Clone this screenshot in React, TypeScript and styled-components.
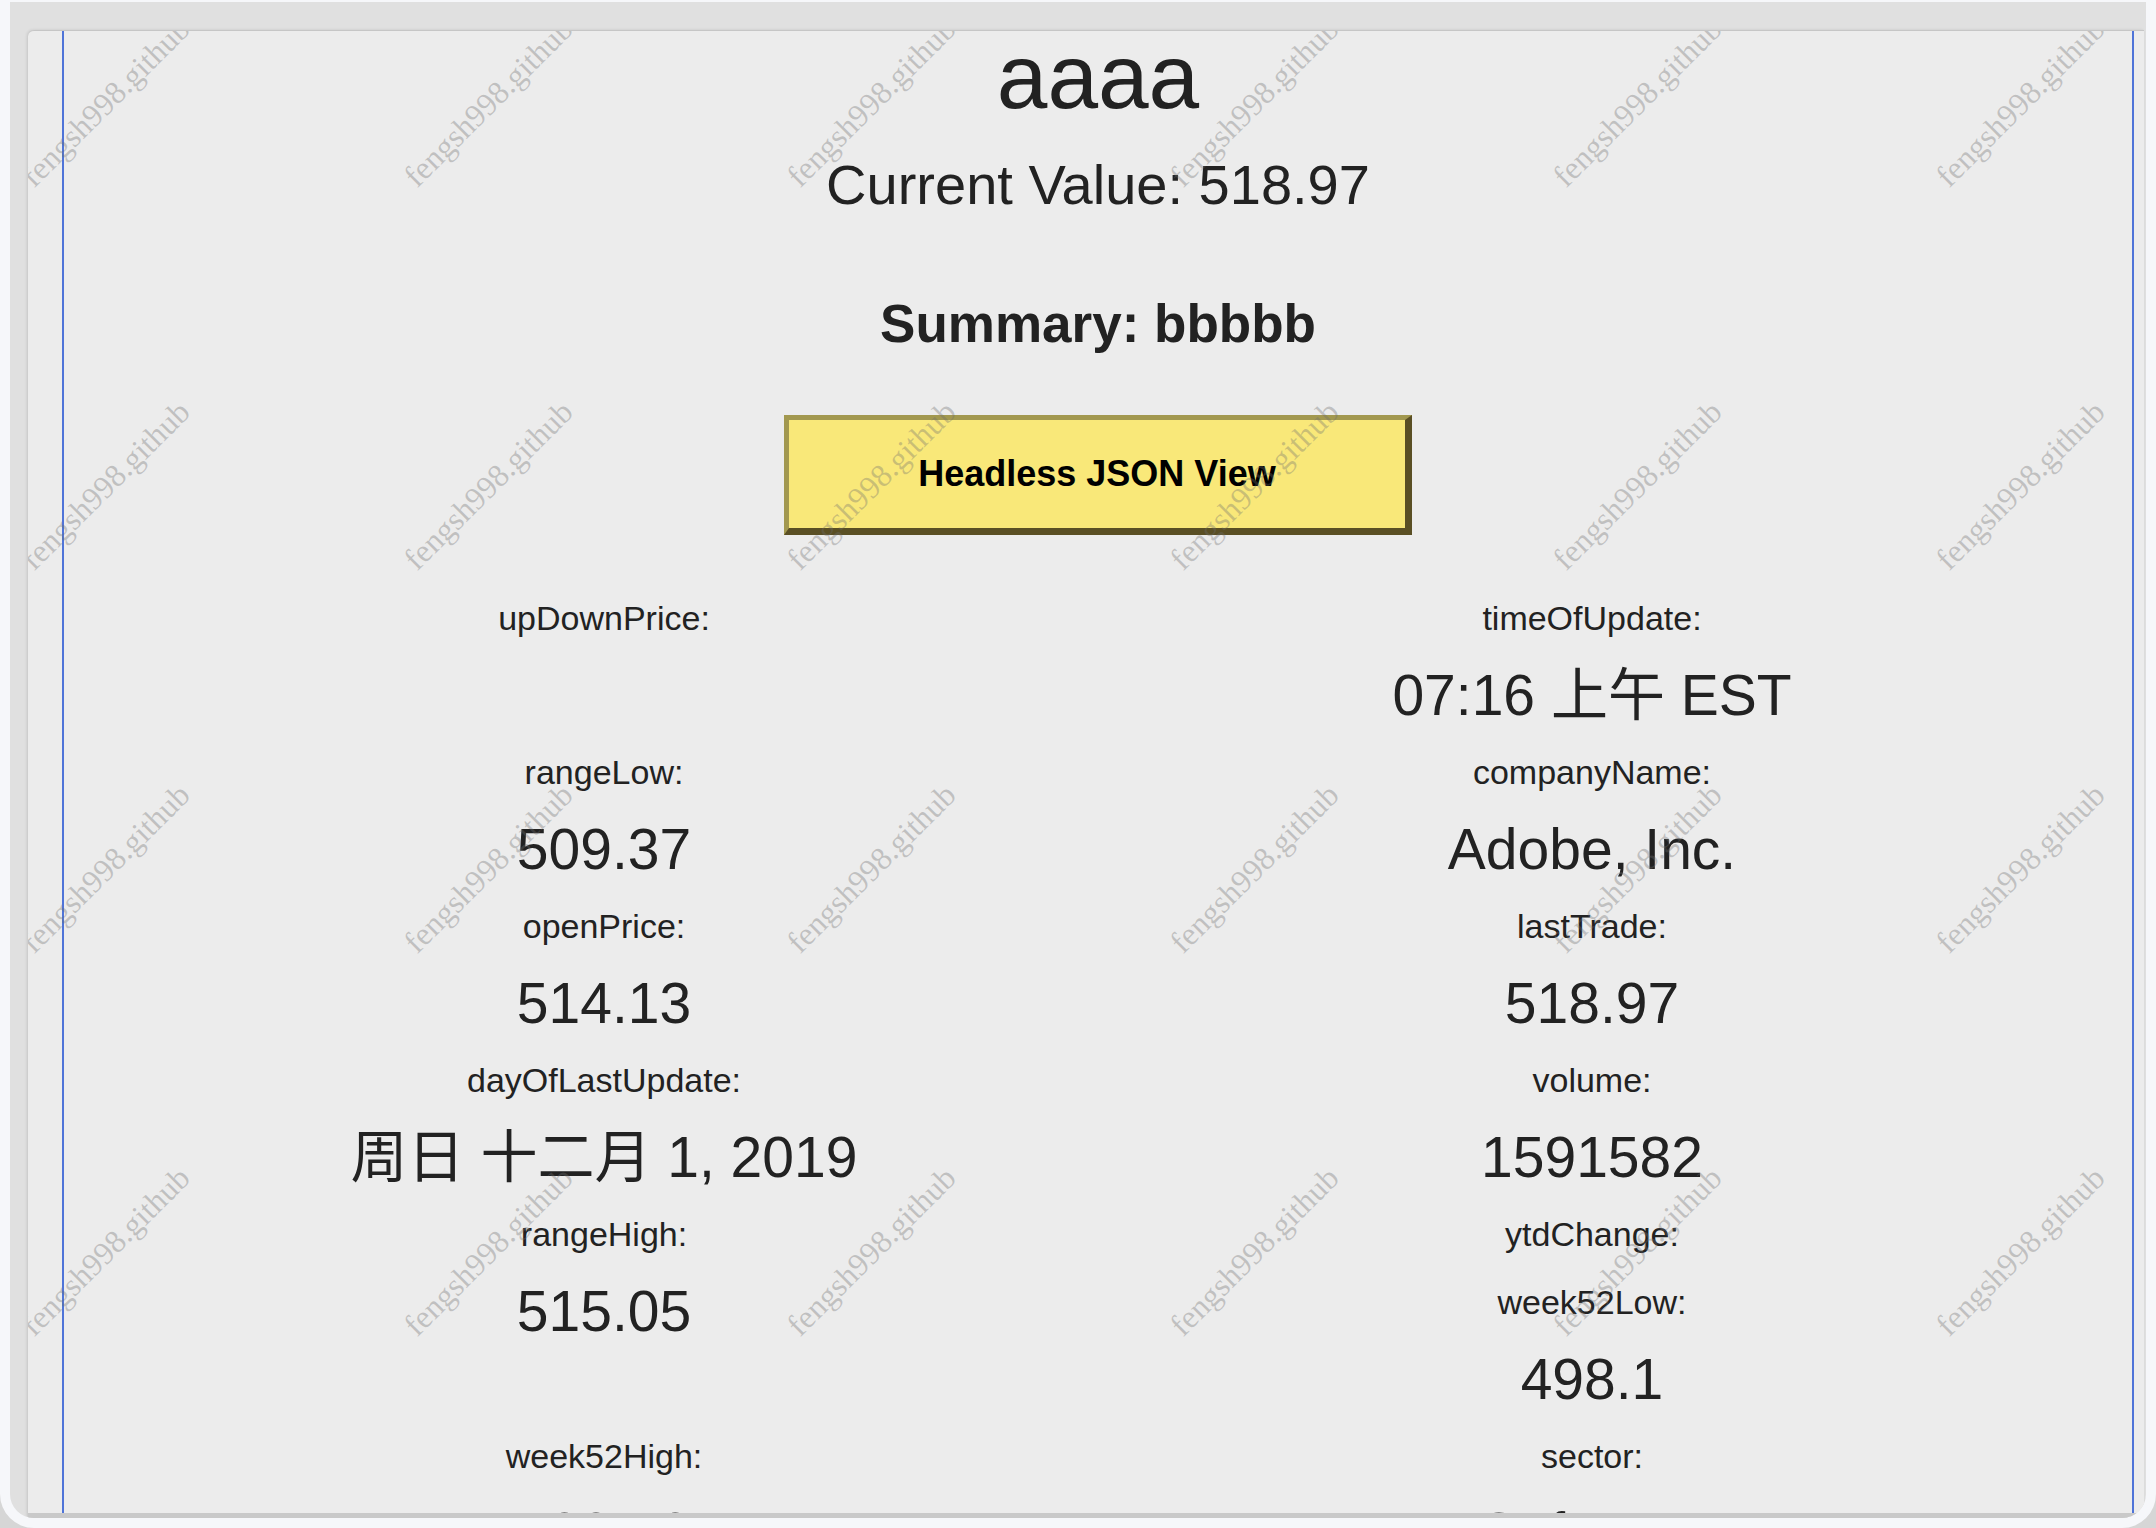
import React from 'react';
import styled, { createGlobalStyle } from 'styled-components';

/**
 * Data
 */
type Entry = { label: string; value: string };
type Row = { left: Entry[]; right: Entry[] };

const rows: Row[] = [
  {
    left: [{ label: 'upDownPrice', value: '' }],
    right: [{ label: 'timeOfUpdate', value: '07:16 上午 EST' }],
  },
  {
    left: [{ label: 'rangeLow', value: '509.37' }],
    right: [{ label: 'companyName', value: 'Adobe, Inc.' }],
  },
  {
    left: [{ label: 'openPrice', value: '514.13' }],
    right: [{ label: 'lastTrade', value: '518.97' }],
  },
  {
    left: [{ label: 'dayOfLastUpdate', value: '周日 十二月 1, 2019' }],
    right: [{ label: 'volume', value: '1591582' }],
  },
  {
    left: [{ label: 'rangeHigh', value: '515.05' }],
    right: [
      { label: 'ytdChange', value: '' },
      { label: 'week52Low', value: '498.1' },
    ],
  },
  {
    left: [{ label: 'week52High', value: '528.43' }],
    right: [{ label: 'sector', value: 'Software' }],
  },
];

const MARK_COLS = 6;
const MARK_ROWS = 4;

/**
 * Global
 */
const GlobalStyle = createGlobalStyle`
  html, body {
    margin: 0;
    padding: 0;
  }
  body {
    background: #d6d6d6;
    color: #222;
    font-family: 'Liberation Sans', Helvetica, Arial, 'Noto Sans CJK SC', sans-serif;
  }
`;

/**
 * Field
 */
const Field = ({ label, value }: Entry) => (
  <FieldBox>
    <Label>{`${label}:`}</Label>
    {value && <Value>{value}</Value>}
  </FieldBox>
);

const App = () => {
  return (
    <>
      <GlobalStyle />
      <Window>
        <Panel>
          <Page>
            <Title>aaaa</Title>
            <Current>Current Value: 518.97</Current>
            <Summary>Summary: bbbbb</Summary>
            <JsonButton type="button">Headless JSON View</JsonButton>
            <Grid>
              {rows.map((row, key) => (
                <React.Fragment key={key}>
                  <Cell>
                    {row.left.map((entry) => (
                      <Field key={entry.label} {...entry} />
                    ))}
                  </Cell>
                  <Cell>
                    {row.right.map((entry) => (
                      <Field key={entry.label} {...entry} />
                    ))}
                  </Cell>
                </React.Fragment>
              ))}
            </Grid>
          </Page>
          <Watermarks>
            {Array.from({ length: MARK_COLS * MARK_ROWS }).map((_, key) => (
              <Mark key={key}>
                <span>fengsh998.github</span>
              </Mark>
            ))}
          </Watermarks>
        </Panel>
      </Window>
    </>
  );
};

/**
 * Styled Components
 */
const Window = styled.div`
  box-sizing: border-box;
  width: 2156px;
  height: 1528px;
  display: flex;
  flex-direction: column;
  background: #e0e0e0;
  border-style: solid;
  border-color: #f6f7fa;
  border-width: 2px 10px 10px 10px;
  border-radius: 0 0 34px 34px;
  padding: 28px 2px 0 18px;
  overflow: hidden;
`;

const Panel = styled.div`
  position: relative;
  flex: 1;
  display: flex;
  align-items: flex-start;
  background: #ececec;
  border-top: 1px solid #c6c6c6;
  border-bottom: 5px solid #c9c9c9;
  border-top-left-radius: 6px;
  box-shadow: -1px 0 3px rgba(0, 0, 0, 0.12);
  overflow: hidden;
`;

const Page = styled.div`
  flex: 1;
  align-self: stretch;
  margin: 0 10px 0 34px;
  border-left: 2px solid #4f74d8;
  border-right: 2px solid #4f74d8;
  display: flex;
  flex-direction: column;
  align-items: center;
  text-align: center;

  & > * {
    flex-shrink: 0;
  }
`;

const Title = styled.h1`
  margin: 0;
  font-size: 91px;
  line-height: 92px;
  font-weight: normal;
`;

const Current = styled.div`
  margin-top: 34px;
  font-size: 56px;
  line-height: 56px;
`;

const Summary = styled.h2`
  margin: 84px 0 0;
  font-size: 53px;
  line-height: 53px;
  font-weight: bold;
`;

const JsonButton = styled.button`
  box-sizing: border-box;
  margin-top: 65px;
  width: 628px;
  height: 120px;
  padding: 0;
  background: #f9e879;
  border-style: solid;
  border-width: 5px 7px 7px 5px;
  border-color: #a2984f #5a4f24 #5a4f24 #a2984f;
  color: #000;
  font-family: inherit;
  font-size: 36px;
  font-weight: bold;
  cursor: pointer;
`;

const Grid = styled.div`
  box-sizing: border-box;
  width: 100%;
  margin-top: 49px;
  padding: 0 46px;
  display: grid;
  grid-template-columns: 1fr 1fr;
  align-items: start;
`;

const Cell = styled.div`
  display: flex;
  flex-direction: column;
`;

const FieldBox = styled.div`
  display: flex;
  flex-direction: column;
  align-items: center;
`;

const Label = styled.div`
  font-size: 34px;
  line-height: 68px;
  white-space: nowrap;
`;

const Value = styled.div`
  font-size: 57px;
  line-height: 86px;
  white-space: nowrap;
`;

const Watermarks = styled.div`
  position: absolute;
  left: -114px;
  top: -120px;
  display: grid;
  grid-template-columns: repeat(${MARK_COLS}, 383px);
  grid-auto-rows: 383px;
  pointer-events: none;
`;

const Mark = styled.div`
  display: flex;
  align-items: center;
  justify-content: center;
  font-family: 'Liberation Serif', 'Times New Roman', serif;
  font-size: 32px;
  color: rgba(110, 110, 110, 0.34);
  white-space: nowrap;
  transform: rotate(-45deg);
`;

export default App;
